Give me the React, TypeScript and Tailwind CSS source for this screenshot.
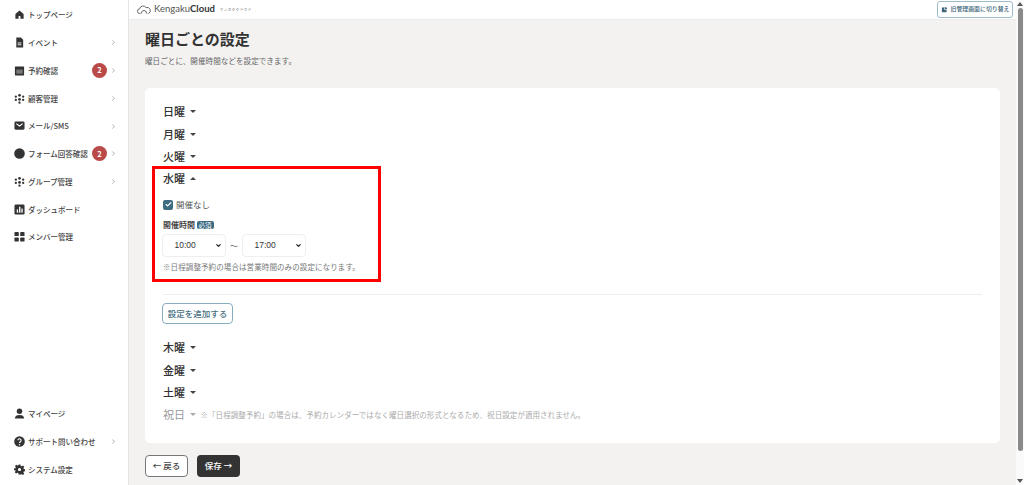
import React from "react";
import { ChevronRight, Check, ChevronDown } from "lucide-react";

const H = "M3 11 L12 3 L21 11 V21 H14 V15 H10 V21 H3 Z";

function NavIcon({ kind }: { kind: string }) {
  const c = "w-[11px] h-[11px] fill-[#333333] shrink-0";
  switch (kind) {
    case "home":
      return <svg viewBox="0 0 24 24" className={c}><path d={H} /></svg>;
    case "doc":
      return <svg viewBox="0 0 24 24" className={c}><path d="M5 1h10l5 5v17H5z" /><rect x="8" y="12" width="8" height="2" fill="#fff" /><rect x="8" y="16" width="8" height="2" fill="#fff" /></svg>;
    case "cal":
      return <svg viewBox="0 0 24 24" className={c}><path d="M3 3h18a1 1 0 0 1 1 1v17a2 2 0 0 1-2 2H4a2 2 0 0 1-2-2V4a1 1 0 0 1 1-1z" /><rect x="5" y="10" width="14" height="9" fill="#777" /></svg>;
    case "people":
      return <svg viewBox="0 0 24 24" className={c}><circle cx="12" cy="5" r="3" /><circle cx="4" cy="8" r="2.5" /><circle cx="20" cy="8" r="2.5" /><circle cx="12" cy="14" r="3" /><circle cx="4" cy="15" r="2.5" /><circle cx="20" cy="15" r="2.5" /><circle cx="12" cy="21" r="2.5" /></svg>;
    case "mail":
      return <svg viewBox="0 0 24 24" className={c}><rect x="1" y="3" width="22" height="18" rx="3" /><path d="M5 8l7 5 7-5" fill="none" stroke="#fff" strokeWidth="2.4" /></svg>;
    case "circle":
      return <svg viewBox="0 0 24 24" className={c}><circle cx="12" cy="12" r="11.5" /></svg>;
    case "chart":
      return <svg viewBox="0 0 24 24" className={c}><rect x="1" y="1" width="22" height="22" rx="3" /><rect x="6" y="12" width="3" height="7" fill="#fff" /><rect x="11" y="6" width="3" height="13" fill="#fff" /><rect x="16" y="10" width="3" height="9" fill="#fff" /></svg>;
    case "grid":
      return <svg viewBox="0 0 24 24" className={c}><rect x="1" y="2" width="9.5" height="9" rx="2" /><rect x="13.5" y="2" width="9.5" height="9" rx="2" /><rect x="1" y="14" width="9.5" height="9" rx="2" /><rect x="13.5" y="14" width="9.5" height="9" rx="2" /></svg>;
    case "user":
      return <svg viewBox="0 0 24 24" className={c}><circle cx="12" cy="7" r="6" /><path d="M2 23c0-6 4-8 10-8s10 2 10 8z" /></svg>;
    case "help":
      return <svg viewBox="0 0 24 24" className={c}><circle cx="12" cy="12" r="11.5" /><path d="M8.5 9.5a3.5 3.5 0 1 1 5.5 3c-1.4 1-2 1.5-2 3" fill="none" stroke="#fff" strokeWidth="2.4" /><circle cx="12" cy="19" r="1.5" fill="#fff" /></svg>;
    default:
      return <svg viewBox="0 0 24 24" className={c}><path fillRule="evenodd" d="M10 1h4l.7 3.2 2 .8L19.500 3.300l2.800 2.800-1.700 2.800.8 2 3.100.7v4l-3.100.7-.8 2 1.700 2.800-2.800 2.800-2.800-1.700-2 .8L14 23h-4l-.7-3.200-2-.8-2.800 1.700-2.800-2.800 1.700-2.800-.8-2L0 14v-4l3.100-.7.8-2L2.200 4.500 5 1.700 7.800 3.400l2-.8zM12 8.500a3.500 3.500 0 1 0 0 7 3.500 3.500 0 0 0 0-7z" /></svg>;
  }
}

function NavItem({ icon, label, chevron, badge }: { icon: string; label: string; chevron?: boolean; badge?: boolean }) {
  return (
    <div className="relative flex items-center h-[27.750px] pl-[14px] pr-[12px] gap-[3px]">
      <NavIcon kind={icon} />
      <span className="text-[7.500px] font-medium text-[#444444] whitespace-nowrap">{label}</span>
      {badge && (
        <span className="absolute left-[92px] top-[6px] w-[15px] h-[15px] rounded-full bg-[#b94a48] text-white text-[7.500px] font-bold flex items-center justify-center">2</span>
      )}
      {chevron && <ChevronRight className="absolute left-[110px] top-[10.500px] w-[7px] h-[7px] text-[#777777]" strokeWidth={2} />}
    </div>
  );
}

function Caret({ up, muted }: { up?: boolean; muted?: boolean }) {
  return (
    <span
      className={`inline-block w-0 h-0 border-l-[3px] border-r-[3px] border-l-transparent border-r-transparent ${up ? "border-b-[3px]" : "border-t-[3px]"} ${muted ? "border-t-[#aaaaaa]" : up ? "border-b-[#444444]" : "border-t-[#444444]"}`}
    />
  );
}

function Day({ label, up, muted }: { label: string; up?: boolean; muted?: boolean }) {
  return (
    <div className="flex items-center h-[22.400px] gap-[4.500px]">
      <span className={`text-[11px] leading-none ${muted ? "text-[#999999]" : "font-medium text-[#333333]"}`}>{label}</span>
      <span className="flex items-center"><Caret up={up} muted={muted} /></span>
    </div>
  );
}

function TimeSelect({ value }: { value: string }) {
  return (
    <div className="w-[64px] h-[23px] rounded-[4px] border border-[#eeeeee] bg-white flex items-center pl-[11.500px] pr-[3px] justify-between">
      <span className="text-[8.500px] text-[#333333]" style={{ fontFamily: "'Liberation Sans', sans-serif" }}>{value}</span>
      <ChevronDown className="w-[7px] h-[7px] text-[#222222]" strokeWidth={4} />
    </div>
  );
}

export default function App() {
  return (
    <div
      className="relative flex w-[1024px] h-[485px] overflow-hidden bg-[#f3f2f1]"
      style={{ fontFamily: "'Noto Sans CJK JP', 'Noto Sans', sans-serif" }}
    >
      <aside className="w-[129px] shrink-0 h-full bg-white border-r border-[#e4e4e4] flex flex-col justify-between pb-[2px] pt-[1px]">
        <div className="flex flex-col">
          <NavItem icon="home" label="トップページ" />
          <NavItem icon="doc" label="イベント" chevron />
          <NavItem icon="cal" label="予約確認" chevron badge />
          <NavItem icon="people" label="顧客管理" chevron />
          <NavItem icon="mail" label="メール/SMS" chevron />
          <NavItem icon="circle" label="フォーム回答確認" chevron badge />
          <NavItem icon="people" label="グループ管理" chevron />
          <NavItem icon="chart" label="ダッシュボード" />
          <NavItem icon="grid" label="メンバー管理" />
        </div>
        <div className="flex flex-col">
          <NavItem icon="user" label="マイページ" />
          <NavItem icon="help" label="サポート問い合わせ" chevron />
          <NavItem icon="gear" label="システム設定" />
        </div>
      </aside>

      <div className="flex-1 min-w-0 flex flex-col">
        <header className="h-[20px] shrink-0 bg-white border-b border-[#ececec] flex items-center justify-between pl-[8px] pr-[11px]">
          <div className="flex items-center gap-[3px]">
            <svg viewBox="0 0 24 16" className="w-[14px] h-[10px] fill-none stroke-[#555555]" strokeWidth="1.500">
              <path d="M6 14H5a4 4 0 0 1-.500-8 6 6 0 0 1 11-2 4.500 4.500 0 0 1 4 10h-1" />
              <path d="M8 14v-3l4-2.500 4 2.500v3" />
            </svg>
            <span className="text-[9.500px] text-[#555555]" style={{ fontFamily: "Lato, sans-serif" }}>
              Kengaku<span className="font-bold text-[#333333]">Cloud</span>
            </span>
            <span className="ml-[2px] text-[3.500px] text-[#666666] tracking-[0.5px]">ケンガククラウド</span>
          </div>
          <div className="h-[17px] mt-[-1px] w-[76px] rounded-[3px] border border-[#9dbccb] bg-white flex items-center justify-center gap-[3px]">
            <svg viewBox="0 0 24 24" className="w-[7px] h-[7px] fill-[#3d6478]"><path d="M3 5h8v8h8v8H3z" /><path d="M13 3a8 8 0 0 1 8 8h-8z" /></svg>
            <span className="text-[5.900px] font-medium text-[#3d6478] whitespace-nowrap">旧管理画面に切り替え</span>
          </div>
        </header>

        <main className="flex-1 min-h-0 pl-[16px] pr-[24px] pt-[7px]">
          <h1 className="text-[15px] leading-[24px] font-bold text-[#333333]">曜日ごとの設定</h1>
          <p className="text-[7.500px] leading-[12px] text-[#666666] mt-[4px] tracking-[0.1px]">曜日ごとに、開催時間などを設定できます。</p>

          <section className="mt-[20.500px] h-[355px] rounded-[5px] bg-white pl-[18px] pr-[18px] pt-[13px]">
            <Day label="日曜" />
            <Day label="月曜" />
            <Day label="火曜" />
            <div className="relative">
              <div className="absolute left-[-11px] top-[-2px] w-[229px] h-[116px] border-[3px] border-[#ff0000] pointer-events-none" />
              <Day label="水曜" up />
              <div className="flex items-center gap-[3px] mt-[5px] h-[19px]">
                <span className="w-[10px] h-[10px] rounded-[2px] bg-[#3d6b82] flex items-center justify-center">
                  <Check className="w-[7px] h-[7px] text-white" strokeWidth={4} />
                </span>
                <span className="text-[8.500px] text-[#555555]">開催なし</span>
              </div>
              <div className="flex items-center gap-[1.500px] mt-[3.500px] h-[14px]">
                <span className="text-[8px] font-bold text-[#444444]">開催時間</span>
                <span className="rounded-[2px] bg-[#3d6b82] text-white text-[6.500px] px-[2px] h-[8px] leading-[8px]">必須</span>
              </div>
              <div className="flex items-center mt-[2.500px] ml-[-1px]">
                <TimeSelect value="10:00" />
                <span className="w-[16px] text-center text-[8px] text-[#666666]">～</span>
                <TimeSelect value="17:00" />
              </div>
              <p className="text-[7.500px] leading-[12px] text-[#777777] mt-[3.500px] tracking-[0.1px]">※日程調整予約の場合は営業時間のみの設定になります。</p>
            </div>

            <div className="h-px bg-[#eeeeee] mt-[21px]" />
            <button className="mt-[8px] ml-[-1px] h-[21px] w-[71px] rounded-[4px] border border-[#86aec0] bg-white text-[8.500px] font-medium text-[#47707f]">設定を追加する</button>

            <div className="mt-[13px]">
              <Day label="木曜" />
              <Day label="金曜" />
              <Day label="土曜" />
              <div className="flex items-center">
                <Day label="祝日" muted />
                <span className="ml-[5px] text-[7.500px] tracking-[0.06px] text-[#aaaaaa]">※「日程調整予約」の場合は、予約カレンダーではなく曜日選択の形式となるため、祝日設定が適用されません。</span>
              </div>
            </div>
          </section>

          <div className="flex gap-[9px] mt-[12px]">
            <button className="w-[43px] h-[22px] rounded-[4px] border border-[#777777] bg-white text-[8.500px] font-medium text-[#444444]">← 戻る</button>
            <button className="w-[43px] h-[22px] rounded-[4px] bg-[#333333] text-[8.500px] font-medium text-white">保存 →</button>
          </div>
        </main>
      </div>

      <div className="absolute right-0 top-0 w-[8px] h-[485px] bg-[#fafafa] flex flex-col items-center">
        <span className="mt-[2px] w-0 h-0 border-l-[3px] border-r-[3px] border-b-[4px] border-l-transparent border-r-transparent border-b-[#555555]" />
        <span className="mt-[2px] w-[5px] h-[443px] rounded-[3px] bg-[#8a8a8a]" />
        <span className="mt-auto mb-[2px] w-0 h-0 border-l-[3px] border-r-[3px] border-t-[4px] border-l-transparent border-r-transparent border-t-[#555555]" />
      </div>
    </div>
  );
}
